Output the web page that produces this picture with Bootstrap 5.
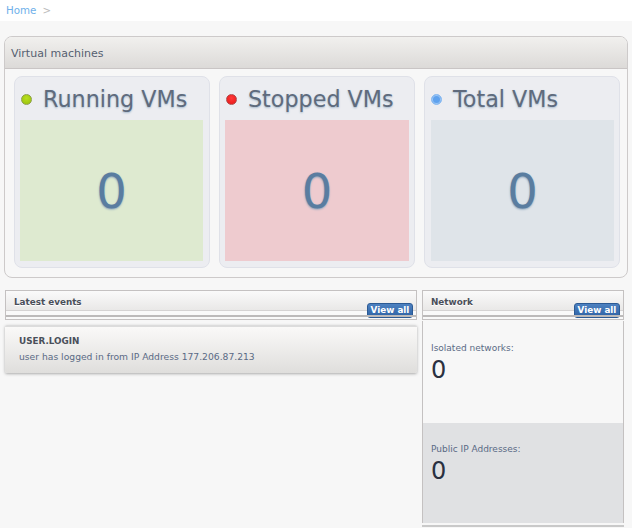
<!DOCTYPE html>
<html lang="en"><head><meta charset="utf-8"><title>Dashboard</title>
<link rel="stylesheet" href="https://cdn.jsdelivr.net/npm/bootstrap@5.3.0/dist/css/bootstrap.min.css">
<style>
html,body{height:528px;overflow:hidden}
body{background:#f7f7f7;font-family:"DejaVu Sans",sans-serif;color:#555f70}
.crumbbar{height:21px;background:#fff;font-size:10.3px;line-height:21px;padding-left:6px;color:#bbb}
.crumbbar a{color:#6fb0ea;text-decoration:none;margin-right:6px}
.vm-panel{margin:15px 4px 0;height:242px;border:1px solid #cdcaca;border-radius:8px;overflow:hidden}
.vm-head{height:32px;background:linear-gradient(#f1f0ee,#dcdad8);border-bottom:1px solid #c9c5c5;font-size:11px;line-height:33px;padding-left:6px;color:#555f70}
.vm-row{padding:7px 7px 0 9px;gap:9px}
.vm-card{width:196px;height:192px;background:#ecedf1;border:1px solid #dfe1e8;border-radius:8px;padding:0 6px 0 5px}
.vm-card.mid{padding-right:5px}
.vm-card.last{padding:0 5px 0 6px}
.vm-title{height:43px;gap:11px;font-size:22.25px;color:#5f6b7d;text-shadow:0 1px 2px #a3b8cc;padding-top:2px;padding-left:1px}
.vm-card.last .vm-title{padding-left:0}
.vm-dot{width:11px;height:11px;border-radius:50%;border:1px solid #8a9a50;flex:none}
.dot-g{background:radial-gradient(circle at 50% 35%,#b8e020,#98bf08);border-color:#8c9f4a}
.dot-r{background:radial-gradient(circle at 50% 35%,#ff3a3a,#e81414);border-color:#b14a4a}
.dot-b{background:#5fa2ee;border-color:#8dbcf0;box-shadow:inset 0 0 0 1px #9cc6f5}
.vm-num{height:141px;font-size:48px;color:#5a7da0;text-shadow:0 1px 2px #8aa3bb}
.fill-g{background:#deead0}.fill-r{background:#eecbcf}.fill-b{background:#dfe4e9}
.lower{margin:12px 0 0 5px;gap:5px}
.left-col{width:412px}
.right-col{width:202px}
.box-head{height:30px;border:1px solid #c4c1c1;position:relative;background:#f9f9f9}
.box-head::before{content:"";display:block;height:20px;background:linear-gradient(#fafafa,#e9e8e7);border-bottom:1px solid #d5d3d3}
.box-head::after{content:"";position:absolute;left:0;right:0;top:24px;height:2px;background:#bcbaba}
.box-label{position:absolute;left:8px;top:5px;font-size:8.8px;font-weight:700;color:#4a4f5a;line-height:12px;text-shadow:0 1px 0 #fff}
.viewall{position:absolute;right:3px;top:12px;width:46px;height:15px;text-align:center;font-size:8.8px;line-height:13px;font-weight:700;color:#fff;background:linear-gradient(#4d81c0,#2f63a5);border:1px solid #2c5a94;border-radius:3px;text-decoration:none}
.evt{margin-top:5px;height:48px;background:linear-gradient(#faf9f8,#dfdedc);border-top:2px solid #dcdcdc;border-radius:2px;box-shadow:0 1px 3px #aaa;padding:6px 14px;width:412px}
.evt-t{font-size:8.8px;font-weight:700;color:#4a4f5a;line-height:14px;margin-top:1px}
.evt-d{font-size:9.2px;color:#5a6a85;line-height:14px;margin-top:2px}
.net-body{margin-top:1px;border:solid #c4c1c1;border-width:0 1px}
.net-sec{height:102px;padding:21px 8px 0;font-size:9px;color:#5a6a85;line-height:12px}
.net-sec.alt{height:100px;background:#e0e1e3;padding-top:20px}
.net-num{font-size:24px;line-height:28px;color:#2a3040;margin-top:2px}
.net-end{height:2px;background:#c9c9c9;margin-top:2px}
</style></head>
<body>
<div class="crumbbar"><a href="#">Home</a>&gt;</div>
<div class="vm-panel">
  <div class="vm-head">Virtual machines</div>
  <div class="vm-row d-flex">
    <div class="vm-card"><div class="vm-title d-flex align-items-center"><span class="vm-dot dot-g"></span>Running VMs</div><div class="vm-num fill-g d-flex align-items-center justify-content-center">0</div></div>
    <div class="vm-card mid"><div class="vm-title d-flex align-items-center"><span class="vm-dot dot-r"></span>Stopped VMs</div><div class="vm-num fill-r d-flex align-items-center justify-content-center">0</div></div>
    <div class="vm-card last"><div class="vm-title d-flex align-items-center"><span class="vm-dot dot-b"></span>Total VMs</div><div class="vm-num fill-b d-flex align-items-center justify-content-center">0</div></div>
  </div>
</div>
<div class="lower d-flex">
  <div class="left-col">
    <div class="box-head"><span class="box-label">Latest events</span><a class="viewall" href="#">View all</a></div>
    <div class="evt"><div class="evt-t">USER.LOGIN</div><div class="evt-d">user has logged in from IP Address 177.206.87.213</div></div>
  </div>
  <div class="right-col">
    <div class="box-head"><span class="box-label">Network</span><a class="viewall" href="#">View all</a></div>
    <div class="net-body">
      <div class="net-sec">Isolated networks:<div class="net-num">0</div></div>
      <div class="net-sec alt">Public IP Addresses:<div class="net-num">0</div></div>
    </div>
    <div class="net-end"></div>
  </div>
</div>
</body></html>
